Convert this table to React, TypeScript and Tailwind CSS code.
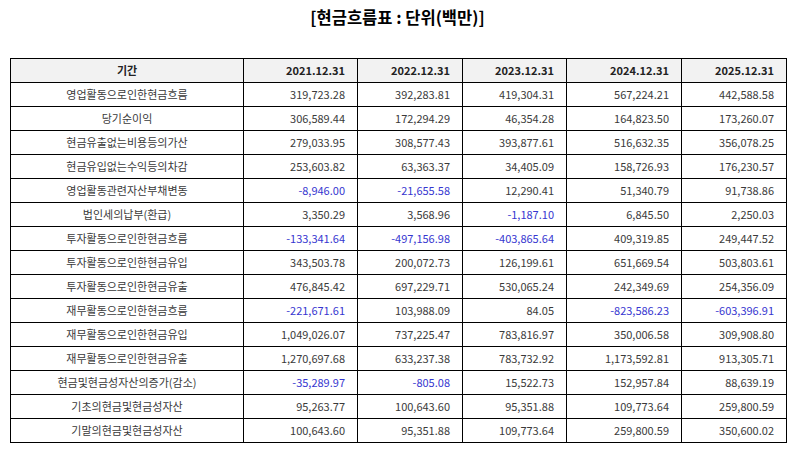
import React from "react";

const headers = ["2021.12.31", "2022.12.31", "2023.12.31", "2024.12.31", "2025.12.31"];

const rows: [string, string[]][] = [
  ["영업활동으로인한현금흐름", ["319,723.28", "392,283.81", "419,304.31", "567,224.21", "442,588.58"]],
  ["당기순이익", ["306,589.44", "172,294.29", "46,354.28", "164,823.50", "173,260.07"]],
  ["현금유출없는비용등의가산", ["279,033.95", "308,577.43", "393,877.61", "516,632.35", "356,078.25"]],
  ["현금유입없는수익등의차감", ["253,603.82", "63,363.37", "34,405.09", "158,726.93", "176,230.57"]],
  ["영업활동관련자산부채변동", ["-8,946.00", "-21,655.58", "12,290.41", "51,340.79", "91,738.86"]],
  ["법인세의납부(환급)", ["3,350.29", "3,568.96", "-1,187.10", "6,845.50", "2,250.03"]],
  ["투자활동으로인한현금흐름", ["-133,341.64", "-497,156.98", "-403,865.64", "409,319.85", "249,447.52"]],
  ["투자활동으로인한현금유입", ["343,503.78", "200,072.73", "126,199.61", "651,669.54", "503,803.61"]],
  ["투자활동으로인한현금유출", ["476,845.42", "697,229.71", "530,065.24", "242,349.69", "254,356.09"]],
  ["재무활동으로인한현금흐름", ["-221,671.61", "103,988.09", "84.05", "-823,586.23", "-603,396.91"]],
  ["재무활동으로인한현금유입", ["1,049,026.07", "737,225.47", "783,816.97", "350,006.58", "309,908.80"]],
  ["재무활동으로인한현금유출", ["1,270,697.68", "633,237.38", "783,732.92", "1,173,592.81", "913,305.71"]],
  ["현금및현금성자산의증가(감소)", ["-35,289.97", "-805.08", "15,522.73", "152,957.84", "88,639.19"]],
  ["기초의현금및현금성자산", ["95,263.77", "100,643.60", "95,351.88", "109,773.64", "259,800.59"]],
  ["기말의현금및현금성자산", ["100,643.60", "95,351.88", "109,773.64", "259,800.59", "350,600.02"]],
];

const colW = ["w-[233px]", "w-[114px]", "w-[105px]", "w-[104px]", "w-[115px]", "w-[105px]"];

export default function App() {
  return (
    <div
      className="w-[795px] h-[452px] bg-white text-[#3a3a3a]"
      style={{ fontFamily: '"Noto Sans CJK KR", "Noto Sans", sans-serif' }}
    >
      <div className="h-[38px] pt-[6px] text-center text-[16.5px] font-bold text-black leading-[22px]">
        [현금흐름표 : 단위(백만)]
      </div>
      <div className="pt-[20px] pl-[10px]">
        <table className="border-collapse table-fixed w-[776px] text-[11px]">
          <colgroup>
            {colW.map((w, i) => (
              <col key={i} className={w} />
            ))}
          </colgroup>
          <thead>
            <tr className="h-[24px] bg-[#f2f2f2]">
              <th className="border border-black text-center font-bold text-[#222] p-0">기간</th>
              {headers.map((h) => (
                <th key={h} className="border border-black text-right font-bold text-[#222] p-0 pr-[12px]">
                  {h}
                </th>
              ))}
            </tr>
          </thead>
          <tbody>
            {rows.map(([label, vals]) => (
              <tr key={label} className="h-[24px]">
                <td className="border border-black text-center p-0">{label}</td>
                {vals.map((v, i) => (
                  <td
                    key={i}
                    className={
                      "border border-black text-right p-0 pr-[12px] " +
                      (v.startsWith("-") ? "text-[#3636d0]" : "")
                    }
                  >
                    {v}
                  </td>
                ))}
              </tr>
            ))}
          </tbody>
        </table>
      </div>
    </div>
  );
}
